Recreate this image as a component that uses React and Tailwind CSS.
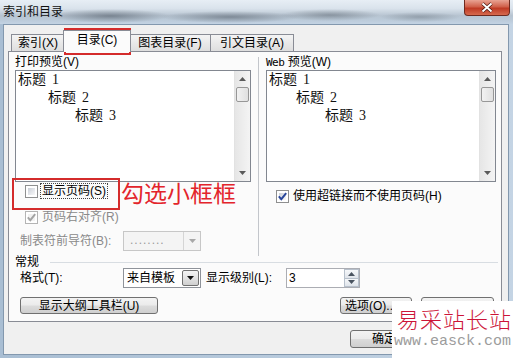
import React from 'react';

const SANS = "font-['Liberation_Sans','Noto_Sans_CJK_SC',sans-serif]";
const SERIF = "font-['Liberation_Serif','Noto_Sans_CJK_SC',serif]";

function Tri({ up, color = '#2b2b2b' }) {
  return (
    <svg width="7" height="4" viewBox="0 0 7 4">
      <path d={up ? 'M0 4L3.5 0L7 4Z' : 'M0 0L7 0L3.5 4Z'} fill={color} />
    </svg>
  );
}

function Check({ checked, disabled }) {
  return (
    <span
      className={`relative w-[13px] h-[13px] shrink-0 border ${
        disabled ? 'border-[#b4b4b4]' : 'border-[#8e8f8f]'
      } bg-white p-[2px] flex`}
    >
      <span
        className={`flex-1 ${
          disabled ? 'bg-[#f2f2f2]' : 'bg-[linear-gradient(135deg,#c9ced6_0%,#e6e8ec_60%,#f8f8f8_100%)]'
        }`}
      />
      {checked && (
        <svg width="13" height="13" viewBox="0 0 13 13" className="absolute -left-px -top-px">
          <path
            d="M2.8 6.4L5.3 9.2L10.2 3.2"
            fill="none"
            stroke={disabled ? '#a3a3a3' : '#27449a'}
            strokeWidth="1.9"
          />
        </svg>
      )}
    </span>
  );
}

function Btn({ children, className = '' }) {
  return (
    <div
      className={`h-full flex items-center justify-center rounded-[3px] border border-[#707070] bg-[linear-gradient(180deg,#f3f3f3_0%,#ebebeb_48%,#dcdcdc_52%,#cfcfcf_100%)] text-[12px] leading-[12px] ${className}`}
    >
      {children}
    </div>
  );
}

function Scrollbar() {
  return (
    <div className="w-[16px] flex flex-col bg-[linear-gradient(90deg,#e6e6e6_0%,#f4f4f4_100%)] border-l border-[#e2e2e2]">
      <div className="h-[16px] flex items-center justify-center">
        <Tri up color="#5a5a5a" />
      </div>
      <div className="h-[15px] mx-[1px] rounded-[2px] border border-[#979797] bg-[linear-gradient(90deg,#f2f2f2_0%,#e0e0e0_100%)]" />
      <div className="flex-1" />
      <div className="h-[16px] flex items-center justify-center">
        <Tri color="#5a5a5a" />
      </div>
    </div>
  );
}

function Preview({ w, indents }) {
  return (
    <div className={`mt-[2px] ${w} h-[112px] border border-[#828790] bg-white flex`}>
      <div className={`flex-1 ${SERIF} text-[14px] leading-[18px] text-[#111]`}>
        {['1', '2', '3'].map((n, i) => (
          <div key={n} style={{ paddingLeft: indents[i] }}>
            标题<span className="ml-[6px]">{n}</span>
          </div>
        ))}
      </div>
      <Scrollbar />
    </div>
  );
}

function Tab({ label, w, selected, className = '' }) {
  return (
    <div
      className={`${w} ${
        selected
          ? 'relative z-10 h-[22px] -mb-px bg-[#fbfbfb] pb-[3px]'
          : 'h-[17px] bg-[linear-gradient(180deg,#f4f4f4_0%,#e9e9e9_50%,#dedede_100%)]'
      } border border-b-0 border-[#898c95] flex items-center justify-center text-[12px] leading-[12px] ${className}`}
    >
      {label}
    </div>
  );
}

export default function App() {
  return (
    <div className={`relative w-[513px] h-[358px] overflow-hidden bg-[linear-gradient(90deg,#a9bed3_0%,#c4d4e4_100%)] ${SANS} text-black flex flex-col`}>
      {/* title bar (aero glass, blurred) */}
      <div className="h-[24px] flex justify-between items-start bg-[radial-gradient(ellipse_60px_7px_at_110px_16px,rgba(70,80,92,0.55),transparent),radial-gradient(ellipse_70px_6px_at_230px_17px,rgba(70,80,92,0.5),transparent),radial-gradient(ellipse_50px_6px_at_330px_15px,rgba(80,90,100,0.45),transparent),radial-gradient(ellipse_40px_5px_at_420px_17px,rgba(80,90,100,0.35),transparent),linear-gradient(180deg,#e7eef5_0%,#dae3ec_35%,#b7c4d1_65%,#bccbda_85%,#c3d3e3_100%)]">
        <div className="self-center pl-[3px] text-[12px] leading-[12px] text-[#111]">索引和目录</div>
        <div className="mr-[3px] w-[46px] h-[16px] rounded-b-[4px] border border-t-0 border-[#6e2a1f] bg-[linear-gradient(180deg,#e9a393_0%,#d0604a_45%,#bf3a24_55%,#d66a4e_100%)] flex items-center justify-center">
          <svg width="14" height="11" viewBox="0 0 14 11">
            <path d="M2.5 1.5L11.5 9.5M11.5 1.5L2.5 9.5" stroke="#4a150d" strokeWidth="3.4" />
            <path d="M2.5 1.5L11.5 9.5M11.5 1.5L2.5 9.5" stroke="#ffffff" strokeWidth="2" />
          </svg>
        </div>
      </div>

      {/* client area */}
      <div className="ml-[3px] mr-[4px] h-[331px] border border-[#8398ae] bg-[#f0f0f0] flex flex-col">
        {/* tabs */}
        <div className="h-[26px] flex items-end pl-[7px]">
          <Tab label="索引(X)" w="w-[54px]" />
          <Tab label="目录(C)" w="w-[68px]" selected className="-ml-[2px]" />
          <Tab label="图表目录(F)" w="w-[82px]" className="-ml-[2px]" />
          <Tab label="引文目录(A)" w="w-[84px]" className="-ml-px" />
        </div>

        {/* tab panel */}
        <div className="relative ml-[4px] w-[494px] border border-[#898c95] bg-[#fbfbfb] pb-[7px] text-[12px] leading-[12px]">
          <div className="h-[204px] flex">
            {/* print preview */}
            <div className="w-[249px] pl-[6px] pt-[4px] flex flex-col">
              <div className="h-[12px]">打印预览(V)</div>
              <Preview w="w-[236px]" indents={[2, 32, 59]} />
              <div className="mt-[1px] h-[16px] flex items-center pl-[10px]">
                <Check />
                <span className="ml-[2px] h-[16px] px-px border border-dotted border-[#444] flex items-center">显示页码(S)</span>
              </div>
              <div className="mt-[10px] h-[16px] flex items-center pl-[10px] text-[#8a8a8a]">
                <Check checked disabled />
                <span className="ml-[4px]">页码右对齐(R)</span>
              </div>
              <div className="mt-[6px] h-[20px] flex items-center pl-[5px] text-[#8a8a8a]">
                <span className="w-[103px]">制表符前导符(B):</span>
                <div className="w-[78px] h-[20px] border border-[#c7c7c7] bg-[#f4f4f4] flex">
                  <span className="flex-1 pl-[6px] tracking-[1px] text-[#9a9a9a] leading-[16px]">........</span>
                  <span className="w-[17px] border-l border-[#d5d5d5] flex items-center justify-center">
                    <Tri color="#a8a8a8" />
                  </span>
                </div>
              </div>
            </div>

            {/* web preview */}
            <div className="mt-[5px] w-px h-[199px] bg-[#c3c6cb]" />
            <div className="pl-[7px] pt-[4px] flex flex-col">
              <div className="h-[12px]">
                <span className="font-['DejaVu_Sans_Mono',monospace] text-[11px] tracking-[-0.5px]">Web</span> 预览(W)
              </div>
              <Preview w="w-[230px]" indents={[2, 29, 58]} />
              <div className="mt-[6px] h-[16px] flex items-center pl-[10px]">
                <Check checked />
                <span className="ml-[4px]">使用超链接而不使用页码(H)</span>
              </div>
            </div>
          </div>

          {/* general */}
          <div className="h-[12px] flex items-center pl-[6px]">
            <span>常规</span>
            <div className="flex-1 ml-[11px] mr-[3px] h-px bg-[#d8dde2]" />
          </div>
          <div className="h-[20px] flex items-center pl-[11px]">
            <span className="w-[103px]">格式(T):</span>
            <div className="w-[78px] h-[20px] border border-[#8f939a] bg-white flex">
              <span className="flex-1 pl-[3px] flex items-center">来自模板</span>
              <span className="w-[17px] m-px rounded-[2px] border border-[#707070] bg-[linear-gradient(180deg,#f3f3f3_0%,#e3e3e3_50%,#cfcfcf_100%)] flex items-center justify-center">
                <Tri color="#111" />
              </span>
            </div>
            <span className="ml-[5px] w-[80px]">显示级别(L):</span>
            <div className="w-[74px] h-[20px] border border-[#abadb3] bg-white flex">
              <span className="flex-1 pl-[2px] flex items-center">3</span>
              <span className="w-[15px] flex flex-col">
                <span className="flex-1 border border-[#b7c0cb] bg-[linear-gradient(180deg,#f6f8fa_0%,#dfe4ea_100%)] flex items-center justify-center">
                  <Tri up color="#4a5460" />
                </span>
                <span className="flex-1 border border-t-0 border-[#b7c0cb] bg-[linear-gradient(180deg,#f6f8fa_0%,#dfe4ea_100%)] flex items-center justify-center">
                  <Tri color="#4a5460" />
                </span>
              </span>
            </div>
          </div>
          <div className="mt-[9px] h-[17px] flex pl-[11px] pr-[7px]">
            <Btn className="w-[138px]">显示大纲工具栏(U)</Btn>
            <div className="flex-1" />
            <Btn className="w-[72px] justify-start pl-[4px]">选项(O)...</Btn>
            {/* label hidden behind the watermark in the reference */}
            <Btn className="ml-[9px] w-[73px]" />
          </div>
        </div>

        {/* dialog buttons */}
        <div className="mt-[8px] h-[18px] flex justify-end gap-[7px] pr-[8px]">
          <Btn className="w-[71px] justify-start pl-[21px] border-[#3c7fb1] bg-[linear-gradient(180deg,#eaf6fd_0%,#d9f0fc_48%,#bee6fd_52%,#a7d9f5_100%)]">确定</Btn>
          <Btn className="w-[72px]" />
        </div>
      </div>

      {/* annotations */}
      <div className="absolute left-[64px] top-[28px] w-[67px] h-[27px] border-2 border-[#d42b2b]" />
      <div className="absolute left-[12px] top-[178px] w-[108px] h-[32px] border-2 border-[#d42b2b]" />
      <div className="absolute left-[121px] top-[177px] text-[23px] leading-[30px] text-[#e3242b] font-['Noto_Sans_CJK_SC',sans-serif]">
        勾选小框框
      </div>

      {/* watermark */}
      <div className="absolute left-[392px] top-[301px] w-[121px] h-[57px] bg-white flex flex-col">
        <div className="pl-[5px] pt-[5px] text-[22px] leading-[24px] tracking-[1px] text-[#cc1438] font-['Noto_Sans_CJK_SC',serif] font-light">
          易采站长站
        </div>
        <div className="mt-[3px] pl-[2px] text-[15px] leading-[18px] text-[#9c9c9c] font-['Liberation_Mono',monospace]">
          www.easck.com
        </div>
      </div>
    </div>
  );
}
